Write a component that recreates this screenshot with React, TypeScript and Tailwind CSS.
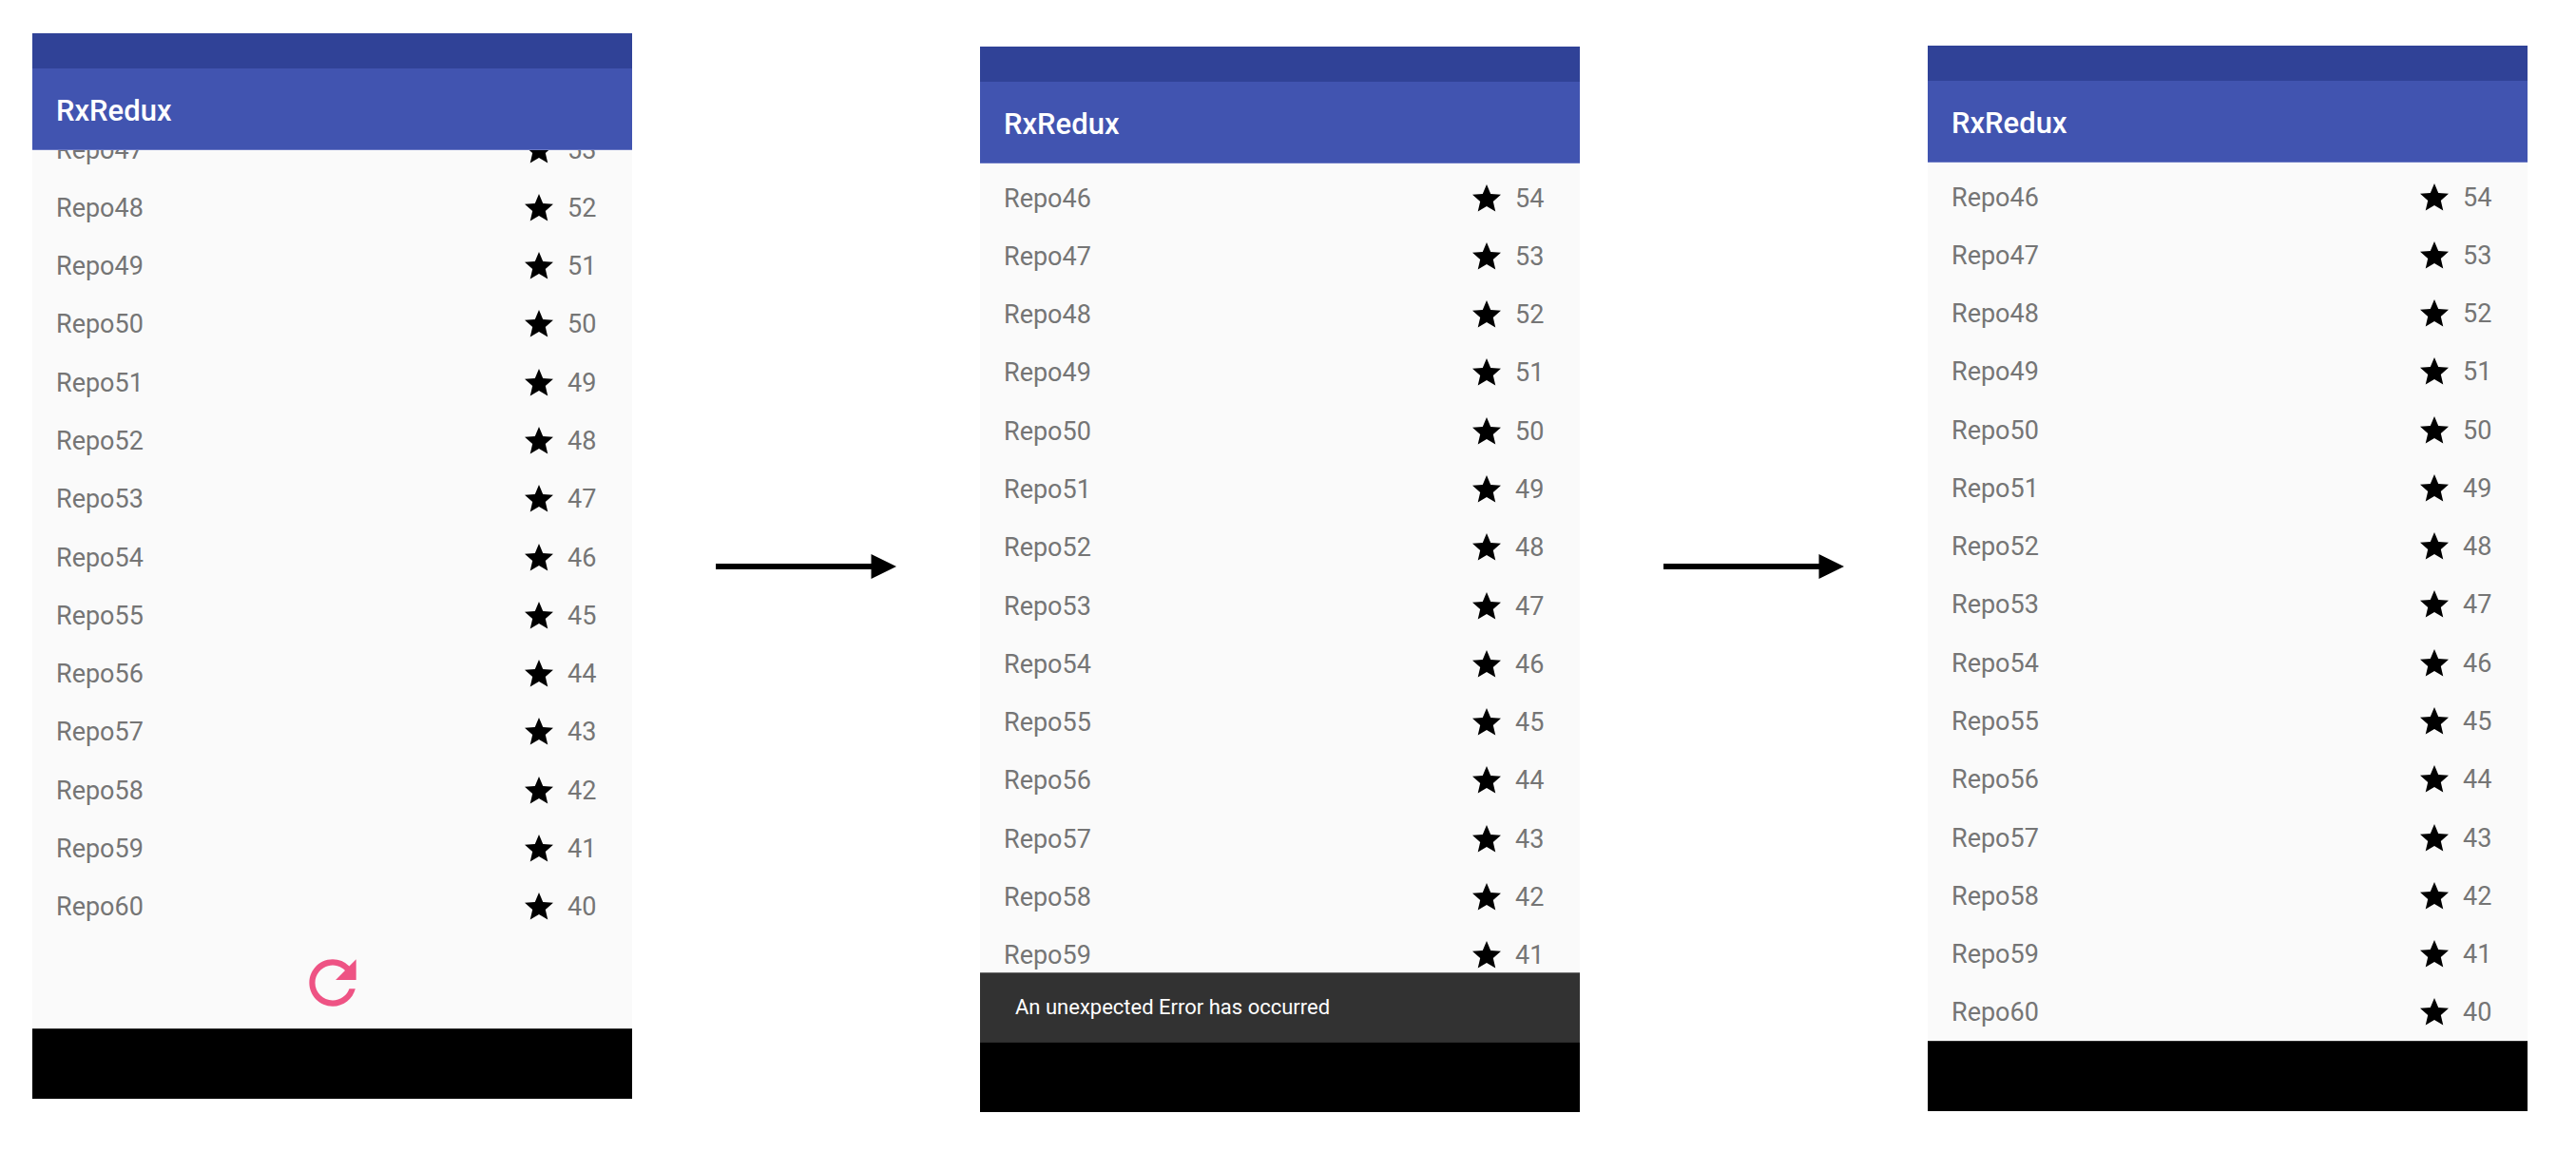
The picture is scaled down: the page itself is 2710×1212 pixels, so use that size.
import type { ReactNode } from "react";
import { MdRefresh, MdStar } from "react-icons/md";

type Repo = { name: string; stars: number };

// Repositories are ranked by stars: Repo46 has 54, Repo47 has 53, and so on.
function repoRange(first: number, last: number): Repo[] {
  return Array.from({ length: last - first + 1 }, (_, i) => ({
    name: `Repo${first + i}`,
    stars: 100 - (first + i),
  }));
}

function RepoList({ repos, className }: { repos: Repo[]; className: string }) {
  return (
    <ul className={`grid shrink-0 auto-rows-fr ${className}`}>
      {repos.map((repo) => (
        <li key={repo.name} className="flex items-center pl-[25px]">
          <span className="flex-1">{repo.name}</span>
          <MdStar className="mr-3 size-9 text-black" aria-label="Stars" />
          <span className="w-[68px]">{repo.stars}</span>
        </li>
      ))}
    </ul>
  );
}

function Phone({ children, className }: { children: ReactNode; className?: string }) {
  return (
    <section className={`flex flex-col ${className ?? ""}`}>
      <div className="h-[37px] bg-[#304297]" />
      <header className="flex h-[86px] items-center border-b border-[#6b79c4] bg-[#4154b0] pt-1 pl-[25px]">
        <h1 className="text-[31px] leading-9 font-medium text-white">RxRedux</h1>
      </header>
      <div className="relative flex h-[924px] flex-col overflow-hidden bg-[#fafafa] text-[27px] leading-8 text-[#757575]">
        {children}
      </div>
      <div className="h-[74px] border-t border-[#2b2b2b] bg-black" />
    </section>
  );
}

function Arrow({ label }: { label: string }) {
  return (
    <svg
      viewBox="0 0 190 26"
      role="img"
      aria-label={label}
      className="mt-[548px] h-[26px] w-[190px] justify-self-center"
    >
      <path d="M0 10h163.500V0L190 13l-26.500 13V16H0z" fill="#000" />
    </svg>
  );
}

export default function App() {
  return (
    <main className="grid min-h-screen grid-cols-[631fr_366fr_631fr_366fr_631fr] items-start bg-white pt-[35px] pr-[51px] pb-10 pl-[34px] font-[Roboto,sans-serif]">
      <Phone>
        <div className="flex min-h-0 flex-1 flex-col justify-end">
          <RepoList repos={repoRange(47, 60)} className="h-[858px]" />
          <div className="flex h-[97px] shrink-0 items-center justify-center">
            <button type="button" aria-label="Retry loading" className="text-[#ee5384]">
              <MdRefresh className="size-[74px]" />
            </button>
          </div>
        </div>
      </Phone>

      <Arrow label="then" />

      <Phone className="mt-[14px]">
        <RepoList repos={repoRange(46, 59)} className="mt-[6px] h-[858px]" />
        <div
          role="status"
          className="absolute inset-x-0 bottom-0 flex h-[73px] items-center border-t border-[#6a6a6a] bg-[#323232] pl-[37px] text-[22px] leading-6 text-white"
        >
          An unexpected Error has occurred
        </div>
      </Phone>

      <Arrow label="then" />

      <Phone className="mt-[13px]">
        <RepoList repos={repoRange(46, 60)} className="mt-[6px] h-[919px]" />
      </Phone>
    </main>
  );
}
